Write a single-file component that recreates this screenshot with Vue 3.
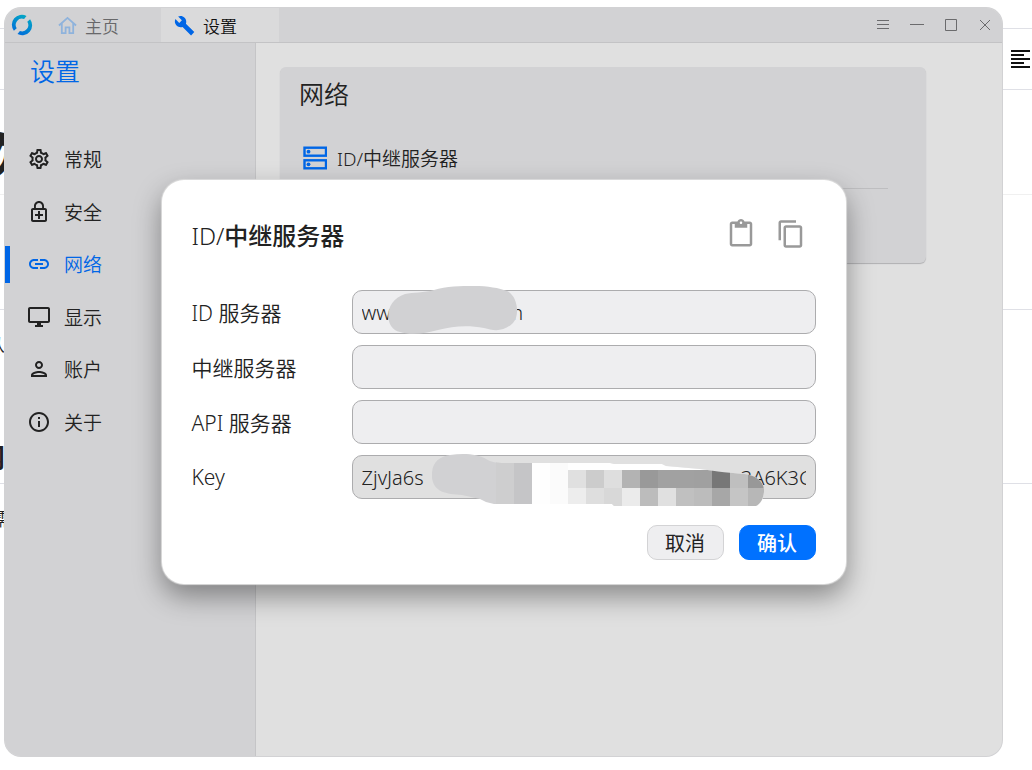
<template>
  <div class="desktop">
    <div class="page">
      <div v-for="row in pageRows" :key="row.name" class="page-row" :class="row.name">
        <span class="page-text">{{ row.text }}</span>
        <strong v-if="row.heading" class="page-text page-heading">{{ row.heading }}</strong>
        <svg v-if="row.menu" class="page-menu" viewBox="0 0 19 20">
          <path d="M0 2h19M0 6h13M0 10h19M0 14h13M0 18h19" stroke="#111" stroke-width="2" />
        </svg>
      </div>
    </div>

    <div class="window">
      <header class="titlebar">
        <svg class="logo" viewBox="0 0 22 22">
          <defs>
            <linearGradient id="logoFill" x1="0.2" y1="1" x2="0.7" y2="0">
              <stop offset="0" stop-color="#0068dc" />
              <stop offset="1" stop-color="#04a9c4" />
            </linearGradient>
          </defs>
          <path
            d="M15.500 1.900A10 10 0 0 0 2.900 16.800L5.700 14.200A6.300 6.300 0 0 1 13.100 4.900ZM6.500 20.100A10 10 0 0 0 19.100 5.200L16.300 7.800A6.300 6.300 0 0 1 8.900 17.100Z"
            fill="url(#logoFill)"
          />
        </svg>
        <button class="tab" type="button">
          <svg class="home-icon" viewBox="0 0 20 20">
            <path
              d="M1 10 10 2l9 8M4 8v10h4v-6h4v6h4V8"
              fill="none"
              stroke="#8fb3dc"
              stroke-width="1.9"
            />
          </svg>
          主页
        </button>
        <button class="tab tab-active" type="button">
          <svg class="wrench-icon" viewBox="0 0 24 24">
            <path
              d="M23.200 19.500l-9.600-9.600c.9-2.300.4-5-1.500-6.900-2-2-5-2.400-7.400-1.300L9 6 6 9 1.600 4.700C.4 7.100.9 10.100 2.900 12.100c1.900 1.900 4.600 2.400 6.900 1.500l9.700 9.700z"
              fill="#0066e6"
            />
          </svg>
          设置
        </button>
        <div class="controls">
          <button v-for="c in controls" :key="c.label" type="button" :aria-label="c.label">
            <svg viewBox="0 0 14 14">
              <path :d="c.path" fill="none" stroke="#6b6b6d" />
            </svg>
          </button>
        </div>
      </header>

      <div class="body">
        <aside class="sidebar">
          <h1>设置</h1>
          <ul>
            <li v-for="item in menu" :key="item.title">
              <a href="#" :class="{ active: item.title === activeItem }" @click.prevent="activeItem = item.title">
                <svg viewBox="0 0 24 24"><path :d="item.icon" fill="currentColor" /></svg>
                {{ item.title }}
              </a>
            </li>
          </ul>
        </aside>

        <main class="content">
          <section class="card">
            <h2>网络</h2>
            <button class="card-row" type="button">
              <svg viewBox="0 0 24 24">
                <g fill="none" stroke="#0066e6" stroke-width="2.4">
                  <rect x="1.500" y="1.700" width="21.500" height="8" />
                  <rect x="1.500" y="14.300" width="21.500" height="8" />
                </g>
                <circle cx="5.500" cy="5.700" r="1.900" fill="#0066e6" />
                <circle cx="5.500" cy="18.300" r="1.900" fill="#0066e6" />
              </svg>
              ID/中继服务器
            </button>
            <hr />
          </section>
        </main>
      </div>

      <div class="overlay">
        <form class="dialog" @submit.prevent>
          <div class="dialog-head">
            <h3>ID/<b>中继服务器</b></h3>
            <button type="button" aria-label="粘贴">
              <svg viewBox="0 0 24 24">
                <path
                  d="M19 2h-4.180C14.400.84 13.300 0 12 0c-1.300 0-2.400.84-2.820 2H5c-1.100 0-2 .9-2 2v16c0 1.100.9 2 2 2h14c1.100 0 2-.9 2-2V4c0-1.100-.9-2-2-2zm-7 0c.55 0 1 .45 1 1s-.45 1-1 1-1-.45-1-1 .45-1 1-1zm7 18H5V4h2v3h10V4h2v16z"
                  fill="currentColor"
                />
              </svg>
            </button>
            <button type="button" aria-label="复制">
              <svg viewBox="0 0 24 24">
                <path
                  d="M16 1H4c-1.100 0-2 .9-2 2v14h2V3h12V1zm3 4H8c-1.100 0-2 .9-2 2v14c0 1.100.9 2 2 2h11c1.100 0 2-.9 2-2V7c0-1.100-.9-2-2-2zm0 16H8V7h11v14z"
                  fill="currentColor"
                />
              </svg>
            </button>
          </div>

          <div class="fields">
            <div class="field">
              <label for="idServer">ID 服务器</label>
              <div class="input-box">
                <input id="idServer" v-model="form.idServer" type="text" />
                <svg class="mask mask-id" viewBox="0 0 132 48">
                  <path
                    d="M19 8C27 6 38 7 48 4C60 0 75 0 88 0C102 0 113 2 121 5C132 10 134 30 127 37C118 46 108 45 98 42C82 39 67 40 52 44C39 48 23 49 14 46C-2 43 -3 15 19 8Z"
                    fill="#d1d1d3"
                  />
                </svg>
              </div>
            </div>
            <div class="field">
              <label for="relayServer">中继服务器</label>
              <div class="input-box">
                <input id="relayServer" v-model="form.relayServer" type="text" />
              </div>
            </div>
            <div class="field">
              <label for="apiServer">API 服务器</label>
              <div class="input-box">
                <input id="apiServer" v-model="form.apiServer" type="text" />
              </div>
            </div>
            <div class="field">
              <label for="key">Key</label>
              <div class="input-box">
                <input id="key" v-model="form.key" class="filled" type="text" />
                <svg class="mask mask-key" viewBox="0 0 332 54">
                  <defs>
                    <clipPath id="keyShape">
                      <path
                        d="M18 1C32 -1 46 0 54 5C59 8 64 9 72 9H178L182 10H230L234 12L268 15L290 18L312 20C325 21 333 29 332 38C331 46 328 50 324 52H182L180 50H62L54 48L48 45L30 41C14 40 2 38 0 24C-1 9 6 3 18 1Z"
                      />
                    </clipPath>
                  </defs>
                  <g clip-path="url(#keyShape)" shape-rendering="crispEdges">
                    <rect width="332" height="54" fill="#d1d1d3" />
                    <rect
                      v-for="(t, i) in tiles"
                      :key="i"
                      :x="t[0]"
                      :y="t[1]"
                      :width="t[2]"
                      :height="t[3]"
                      :fill="t[4]"
                    />
                  </g>
                </svg>
              </div>
            </div>
          </div>

          <div class="actions">
            <button type="button">取消</button>
            <button class="primary" type="submit">确认</button>
          </div>
        </form>
      </div>
    </div>
  </div>
</template>

<script setup>
import { ref, reactive } from "vue";

const pageRows = [
  { name: "row-top", text: "" },
  { name: "row-tools", text: "", menu: true },
  { name: "row-title", text: "次" },
  { name: "row-gap", text: "" },
  { name: "row-text", text: "从", heading: "网" },
  { name: "row-rest", text: "需" },
];

const controls = [
  { label: "菜单", path: "M1 2.500h12M1 6.500h12M1 10.500h12" },
  { label: "最小化", path: "M0 6.500h14" },
  { label: "最大化", path: "M1.500 1.500h11v11h-11z" },
  { label: "关闭", path: "M2 2l10 10M12 2L2 12" },
];

const activeItem = ref("网络");

const menu = [
  {
    title: "常规",
    icon: "M19.430 12.980c.04-.32.07-.64.07-.98 0-.34-.03-.66-.07-.98l2.110-1.650c.19-.15.24-.42.12-.64l-2-3.460c-.09-.16-.26-.25-.44-.25-.06 0-.12.01-.17.03l-2.490 1c-.52-.4-1.080-.73-1.690-.98l-.38-2.650C14.460 2.180 14.250 2 14 2h-4c-.25 0-.46.18-.49.42l-.38 2.650c-.61.25-1.170.59-1.690.98l-2.490-1c-.06-.02-.12-.03-.18-.03-.17 0-.34.09-.43.25l-2 3.460c-.13.22-.07.49.12.64l2.110 1.650c-.04.32-.07.65-.07.98 0 .33.03.66.07.98l-2.110 1.650c-.19.15-.24.42-.12.64l2 3.460c.09.16.26.25.44.25.06 0 .12-.01.17-.03l2.490-1c.52.4 1.080.73 1.690.98l.38 2.650c.03.24.24.42.49.42h4c.25 0 .46-.18.49-.42l.38-2.650c.61-.25 1.170-.59 1.690-.98l2.490 1c.06.02.12.03.18.03.17 0 .34-.09.43-.25l2-3.460c.12-.22.07-.49-.12-.64l-2.110-1.650zm-1.980-1.710c.04.31.05.52.05.73 0 .21-.02.43-.05.73l-.14 1.130.89.7 1.080.84-.7 1.210-1.270-.51-1.040-.42-.9.68c-.43.32-.84.56-1.250.73l-1.060.43-.16 1.130-.2 1.350h-1.400l-.19-1.350-.16-1.130-1.060-.43c-.43-.18-.83-.41-1.230-.71l-.91-.7-1.060.43-1.270.51-.7-1.210 1.080-.84.89-.7-.14-1.130c-.03-.31-.05-.54-.05-.74s.02-.43.05-.73l.14-1.130-.89-.7-1.080-.84.7-1.210 1.270.51 1.040.42.9-.68c.43-.32.84-.56 1.250-.73l1.060-.43.16-1.130.2-1.350h1.390l.19 1.350.16 1.130 1.060.43c.43.18.83.41 1.230.71l.91.7 1.060-.43 1.270-.51.7 1.210-1.070.85-.89.7.14 1.130zM12 8c-2.210 0-4 1.790-4 4s1.790 4 4 4 4-1.790 4-4-1.790-4-4-4zm0 6c-1.100 0-2-.9-2-2s.9-2 2-2 2 .9 2 2-.9 2-2 2z",
  },
  {
    title: "安全",
    icon: "M18 8h-1V6c0-2.760-2.240-5-5-5S7 3.240 7 6v2H6c-1.100 0-2 .9-2 2v10c0 1.100.9 2 2 2h12c1.100 0 2-.9 2-2V10c0-1.100-.9-2-2-2zM8.900 6c0-1.710 1.390-3.100 3.100-3.100s3.100 1.390 3.100 3.100v2H8.900V6zM18 20H6V10h12v10zM11 19h2v-3h3v-2h-3v-3h-2v3H8v2h3z",
  },
  {
    title: "网络",
    icon: "M3.900 12c0-1.710 1.390-3.100 3.100-3.100h4V7H7c-2.760 0-5 2.240-5 5s2.240 5 5 5h4v-1.900H7c-1.710 0-3.100-1.390-3.100-3.100zM8 13h8v-2H8v2zm9-6h-4v1.900h4c1.710 0 3.100 1.390 3.100 3.100s-1.390 3.100-3.100 3.100h-4V17h4c2.760 0 5-2.240 5-5s-2.240-5-5-5z",
  },
  {
    title: "显示",
    icon: "M21 2H3c-1.100 0-2 .9-2 2v12c0 1.100.9 2 2 2h7v2H8v2h8v-2h-2v-2h7c1.100 0 2-.9 2-2V4c0-1.100-.9-2-2-2zm0 14H3V4h18v12z",
  },
  {
    title: "账户",
    icon: "M12 6c1.100 0 2 .9 2 2s-.9 2-2 2-2-.9-2-2 .9-2 2-2m0 10c2.700 0 5.800 1.290 6 2H6c.23-.72 3.310-2 6-2m0-12C9.790 4 8 5.790 8 8s1.790 4 4 4 4-1.790 4-4-1.790-4-4-4zm0 10c-2.670 0-8 1.340-8 4v2h16v-2c0-2.660-5.330-4-8-4z",
  },
  {
    title: "关于",
    icon: "M11 7h2v2h-2zm0 4h2v6h-2zm1-9C6.480 2 2 6.480 2 12s4.480 10 10 10 10-4.480 10-10S17.520 2 12 2zm0 18c-4.410 0-8-3.590-8-8s3.590-8 8-8 8 3.590 8 8-3.590 8-8 8z",
  },
];

const form = reactive({
  idServer: "ww" + " ".repeat(22) + "m",
  relayServer: "",
  apiServer: "",
  key: "ZjvJa6s" + " ".repeat(61) + "3A6K3G",
});

// Мозаика поверх ключа: x, y, ширина, высота, цвет
const tiles = [
  [64, 0, 18, 54, "#cececf"],
  [82, 0, 18, 54, "#c5c5c7"],
  [100, 0, 18, 54, "#fefefe"],
  [118, 0, 18, 54, "#fbfbfb"],
  [136, 0, 196, 54, "#ffffff"],
];
const top = ["#e0e0e0", "#cccccc", "#dedede", "#b3b3b3", "#999999", "#a1a1a1", "#a1a1a1", "#a0a0a0", "#777777", "#bfbfbf", "#989898"];
const bottom = ["#ededed", "#dedede", "#d8d8d8", "#ebebeb", "#bcbcbc", "#e0e0e0", "#c0c0c0", "#bcbcbc", "#a7a7a7", "#c5c5c5", "#b7b7b7"];
top.forEach((color, i) => tiles.push([136 + i * 18, 16, 18, 18, color]));
bottom.forEach((color, i) => tiles.push([136 + i * 18, 34, 18, 20, color]));
</script>

<style>
body {
  margin: 0;
  background-color: #ffffff;
}
</style>

<style scoped>
.desktop {
  position: relative;
  box-sizing: border-box;
  min-height: 100vh;
  padding: 8px 30px 14px 5px;
  display: flex;
  overflow: hidden;
  font-family: "Noto Sans", "Noto Sans CJK SC", sans-serif;
  font-weight: 350;
  color: #222222;
}

button {
  padding: 0;
  border: none;
  background: none;
  font: inherit;
  color: inherit;
  cursor: pointer;
}

svg {
  display: block;
  flex: none;
}

h1,
h2,
h3 {
  margin: 0;
  font-weight: inherit;
}

/* страница позади окна */
.page {
  position: absolute;
  inset: 0;
  display: grid;
  grid-template-rows: 29px 61px 105px 115px 174px 1fr;
}

.page-row {
  box-sizing: border-box;
  display: flex;
  align-items: center;
  justify-content: space-between;
  padding-right: 2px;
  border-bottom: 1px solid #dfe0e6;
  font-size: 18px;
}

.page-text {
  width: 5px;
  display: flex;
  justify-content: center;
}

.page-menu {
  width: 19px;
  height: 20px;
}

.row-title {
  padding-top: 20px;
  border-color: #f0f0f0;
  font-size: 48px;
  font-weight: 700;
}

.row-text {
  flex-direction: column;
  align-items: flex-start;
  padding: 21px 0 8px;
}

.row-text .page-text {
  justify-content: flex-end;
}

.page-heading {
  font-size: 26px;
}

.row-rest {
  align-items: flex-start;
  padding-top: 21px;
  border: none;
}

.window {
  position: relative;
  flex: 1;
  display: flex;
  flex-direction: column;
  overflow: hidden;
  border-radius: 16px;
  background-color: #e0e0e0;
  box-shadow: 0 0 0 1px #d2d2d4;
}

.titlebar {
  display: flex;
  align-items: stretch;
  height: 34px;
  border-bottom: 1px solid #c3c3c5;
  background-color: #d2d2d4;
}

.logo {
  width: 22px;
  height: 22px;
  margin: 6px 16px 0 6px;
}

.tab {
  box-sizing: border-box;
  display: flex;
  align-items: center;
  gap: 8px;
  width: 112px;
  padding-left: 9px;
  font-size: 17px;
  color: #68686a;
}

.tab-active {
  width: 118px;
  padding-left: 13px;
  background-color: #dadadb;
  color: #111111;
}

.home-icon {
  width: 19px;
  height: 19px;
}

.wrench-icon {
  width: 21px;
  height: 21px;
}

.controls {
  display: flex;
  margin-left: auto;
}

.controls button {
  display: flex;
  align-items: center;
  justify-content: center;
  width: 34px;
}

.controls svg {
  width: 14px;
  height: 14px;
}

.body {
  flex: 1;
  display: flex;
}

.sidebar {
  width: 250px;
  border-right: 1px solid #c5c5c7;
  background-color: #d2d2d4;
}

.sidebar h1 {
  padding: 10px 25px 0;
  font-size: 25px;
  line-height: 36px;
  color: #0066e6;
}

.sidebar ul {
  display: grid;
  grid-auto-rows: 1fr;
  height: 315px;
  margin: 44px 0 0;
  padding: 0;
  list-style: none;
}

.sidebar li {
  display: flex;
  align-items: center;
}

.sidebar a {
  flex: 1;
  display: flex;
  align-items: center;
  gap: 13px;
  height: 37px;
  padding-left: 17px;
  border-left: 5px solid transparent;
  font-size: 19px;
  color: inherit;
  text-decoration: none;
}

.sidebar a.active {
  border-color: #0066e6;
  color: #0066e6;
}

.sidebar svg {
  width: 24px;
  height: 24px;
}

.content {
  flex: 1;
  padding: 24px 76px 24px 24px;
}

.card {
  box-sizing: border-box;
  min-height: 196px;
  padding: 9px 38px 20px 19px;
  border-radius: 6px;
  background-color: #d2d2d4;
  box-shadow: 0 1px 1px #b0b0b2;
}

.card h2 {
  font-size: 25px;
  line-height: 36px;
}

.card-row {
  display: flex;
  align-items: center;
  gap: 10px;
  height: 40px;
  margin-top: 26px;
  padding-left: 4px;
  font-size: 19px;
}

.card-row svg {
  width: 24px;
  height: 24px;
}

.card hr {
  margin: 10px 0 0;
  border: none;
  border-top: 1px solid #bebec0;
}

.overlay {
  position: absolute;
  inset: 0;
  display: flex;
  align-items: center;
  justify-content: center;
}

.dialog {
  box-sizing: border-box;
  width: 684px;
  max-width: 100%;
  padding: 30px 30px 24px;
  border-radius: 22px;
  background-color: #ffffff;
  box-shadow: 0 0 1px 1px #dcdcdc, 0 12px 28px rgba(0, 0, 0, 0.4);
}

.dialog-head {
  display: flex;
  align-items: center;
  height: 48px;
}

.dialog-head h3 {
  flex: 1;
  font-size: 24px;
}

.dialog-head b {
  font-weight: 500;
}

.dialog-head button {
  display: flex;
  justify-content: center;
  width: 50px;
  color: #999999;
}

.dialog-head svg {
  width: 30px;
  height: 30px;
}

.fields {
  display: flex;
  flex-direction: column;
  gap: 11px;
  margin-top: 32px;
}

.field {
  display: flex;
  align-items: center;
}

.field label {
  width: 160px;
  font-size: 21px;
}

.input-box {
  position: relative;
  flex: 1;
}

input {
  display: block;
  box-sizing: border-box;
  width: 100%;
  height: 44px;
  padding: 0 9px;
  border: 1px solid #acacae;
  border-radius: 10px;
  outline: none;
  background-color: #eeeef0;
  font: inherit;
  font-size: 20px;
  color: #222222;
}

input.filled {
  background-color: #e0e0e0;
}

.mask {
  position: absolute;
  pointer-events: none;
}

.mask-id {
  top: -4px;
  left: 34px;
  width: 132px;
  height: 48px;
}

.mask-key {
  top: -1px;
  left: 80px;
  width: 332px;
  height: 54px;
}

.actions {
  display: flex;
  justify-content: flex-end;
  gap: 15px;
  margin-top: 26px;
}

.actions button {
  width: 77px;
  height: 35px;
  border: 1px solid #d3d3d5;
  border-radius: 10px;
  background-color: #eeeef0;
  font-size: 20px;
  font-weight: 400;
  line-height: 35px;
}

.actions .primary {
  border-color: #0071ff;
  background-color: #0071ff;
  font-weight: 500;
  color: #ffffff;
}
</style>
